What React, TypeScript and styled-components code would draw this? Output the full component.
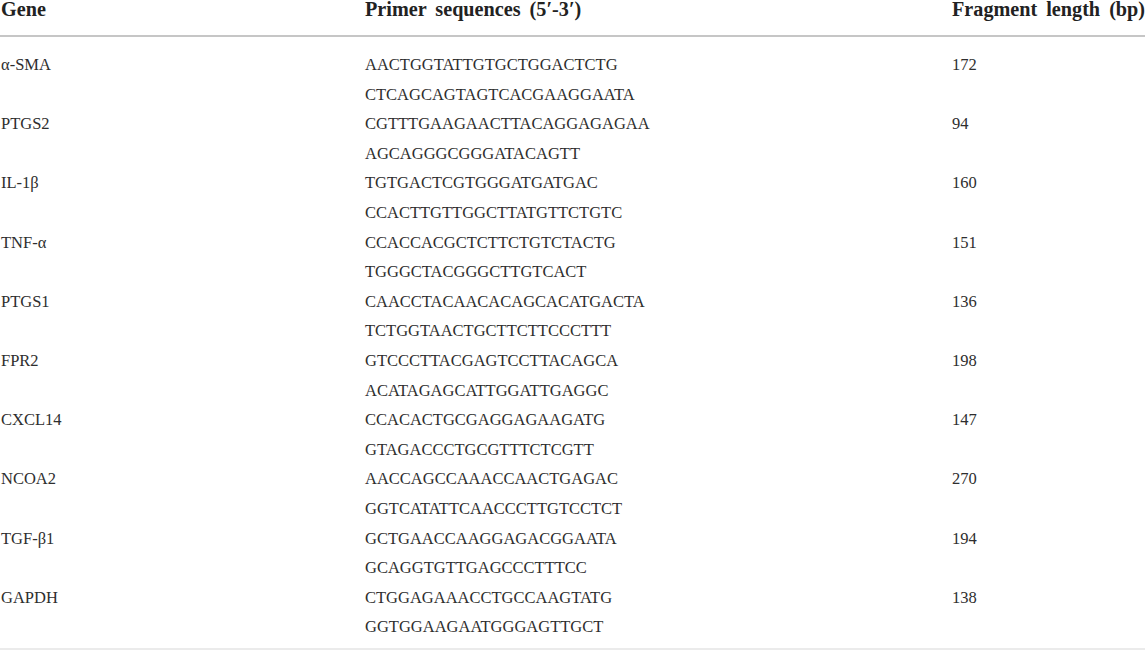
import React from "react";
import styled, { createGlobalStyle } from "styled-components";

const Global = createGlobalStyle`
  html, body { margin: 0; padding: 0; background: #ffffff; }
`;

const Table = styled.table`
  width: 1145px;
  border-collapse: collapse;
  table-layout: fixed;
  font-family: "Liberation Serif", "Times New Roman", serif;
  color: #2e2e2e;
`;

const Col = styled.col<{ $w: number }>`
  width: ${(p) => p.$w}px;
`;

const HeadCell = styled.th`
  text-align: left;
  font-size: 20.2px;
  font-weight: 700;
  line-height: 18px;
  word-spacing: 4px;
  color: #222222;
  padding: 0 0 17px 1px;
  border-bottom: 2px solid #c6c6c6;
  white-space: nowrap;
`;

const Cell = styled.td<{ $first?: boolean; $last?: boolean }>`
  vertical-align: top;
  font-size: 16.5px;
  line-height: 29.6px;
  padding: ${(p) => (p.$first ? "13px" : "0")} 0 ${(p) => (p.$last ? "6px" : "0")} 1px;
  border-bottom: ${(p) => (p.$last ? "2px solid #ebebeb" : "none")};
  white-space: nowrap;
`;

const Line = styled.div`
  height: 29.6px;
`;

const rows: [string, string, string, string][] = [
  ["α-SMA", "AACTGGTATTGTGCTGGACTCTG", "CTCAGCAGTAGTCACGAAGGAATA", "172"],
  ["PTGS2", "CGTTTGAAGAACTTACAGGAGAGAA", "AGCAGGGCGGGATACAGTT", "94"],
  ["IL-1β", "TGTGACTCGTGGGATGATGAC", "CCACTTGTTGGCTTATGTTCTGTC", "160"],
  ["TNF-α", "CCACCACGCTCTTCTGTCTACTG", "TGGGCTACGGGCTTGTCACT", "151"],
  ["PTGS1", "CAACCTACAACACAGCACATGACTA", "TCTGGTAACTGCTTCTTCCCTTT", "136"],
  ["FPR2", "GTCCCTTACGAGTCCTTACAGCA", "ACATAGAGCATTGGATTGAGGC", "198"],
  ["CXCL14", "CCACACTGCGAGGAGAAGATG", "GTAGACCCTGCGTTTCTCGTT", "147"],
  ["NCOA2", "AACCAGCCAAACCAACTGAGAC", "GGTCATATTCAACCCTTGTCCTCT", "270"],
  ["TGF-β1", "GCTGAACCAAGGAGACGGAATA", "GCAGGTGTTGAGCCCTTTCC", "194"],
  ["GAPDH", "CTGGAGAAACCTGCCAAGTATG", "GGTGGAAGAATGGGAGTTGCT", "138"],
];

export default function App() {
  return (
    <>
      <Global />
      <Table>
        <colgroup>
          <Col $w={364} />
          <Col $w={587} />
          <Col $w={194} />
        </colgroup>
        <thead>
          <tr>
            <HeadCell>Gene</HeadCell>
            <HeadCell>Primer sequences (5′-3′)</HeadCell>
            <HeadCell>Fragment length (bp)</HeadCell>
          </tr>
        </thead>
        <tbody>
          {rows.map(([gene, fwd, rev, len], i) => {
            const first = i === 0;
            const last = i === rows.length - 1;
            return (
              <tr key={gene}>
                <Cell $first={first} $last={last}>{gene}</Cell>
                <Cell $first={first} $last={last}>
                  <Line>{fwd}</Line>
                  <Line>{rev}</Line>
                </Cell>
                <Cell $first={first} $last={last}>{len}</Cell>
              </tr>
            );
          })}
        </tbody>
      </Table>
    </>
  );
}
